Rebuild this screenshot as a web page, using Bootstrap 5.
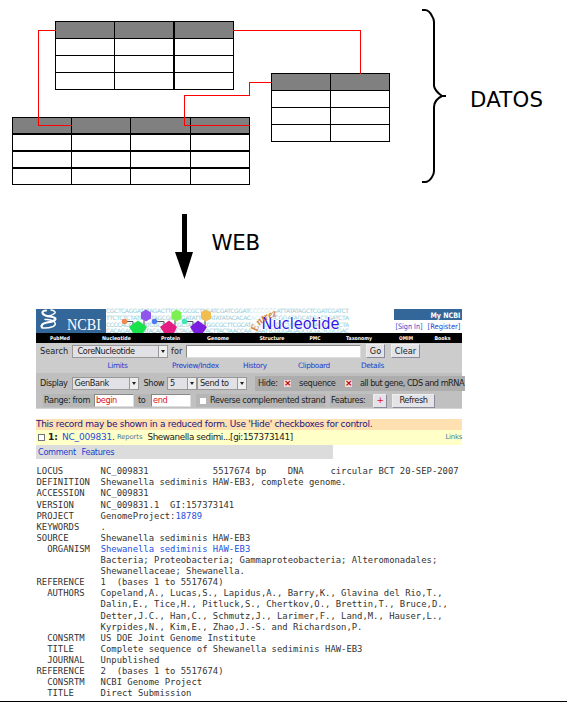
<!DOCTYPE html>
<html lang="es">
<head>
<meta charset="utf-8">
<meta name="viewport" content="width=device-width, initial-scale=1">
<title>Datos y web</title>
<link rel="stylesheet" href="https://cdn.jsdelivr.net/npm/bootstrap@5.3.0/dist/css/bootstrap.min.css">
<style>
body{width:567px;height:702px;font-family:"DejaVu Sans",sans-serif;font-size:8.2px;line-height:1;color:#222}
.sheet{height:702px;border-bottom:1px solid #000}
svg text{font-family:"DejaVu Sans",sans-serif}
.ncbi{width:426px;margin-left:36px;white-space:nowrap}
.tools{background:#ccc;height:66px;width:426px}
.cells{display:grid;align-items:center;justify-items:start}
.r-search{height:16px;grid-template-columns:35.5px 99.5px 15px 180px 25px auto}
.r-search>:first-child,.r-display>:first-child{margin-left:4px}
.r-links{height:14px;grid-template-columns:71.5px 64.5px 71px 55px 63px auto;font-size:7.4px;letter-spacing:-.38px;color:#1c3fd0}
.r-display{height:20px;width:430px;background:linear-gradient(#bfbfbf,#bfbfbf) 0 0/426px 100% no-repeat;grid-template-columns:35.5px 72px 23.5px 30px 58px 210px;letter-spacing:-.37px}
.r-range{height:16px;background:#c0c0c0;border-bottom:1px solid #d4d4d4;grid-template-columns:153px 134px auto;padding-left:7px;letter-spacing:-.4px}
.tools .cells span{flex:none}
.pick{display:flex;height:13px;background:#e2e2e6;border:1px solid #999;align-items:center;justify-content:space-between;padding-left:5px;letter-spacing:-.4px}
.pick i{width:9px;height:11px;border-left:1px solid #999;background:#eee;display:flex;align-items:center;justify-content:center}
.pick i::after{content:"";border:2px solid transparent;border-top:3px solid #222;border-bottom:0}
.field{background:#fff;border:1px solid #888;border-right-color:#ddd;border-bottom-color:#ddd}
.push{background:#e3e3e8;border:1px solid #eee;border-right-color:#8a8a9a;border-bottom-color:#8a8a9a;display:flex;align-items:center;justify-content:center}
.box{background:#adadad;height:15px;display:flex;align-items:center}
.box.soft{background:#b6b6b6;height:13px}
.tick{width:7px;height:7px;background:#f4dada;color:#b00;display:flex;align-items:center;justify-content:center;font-size:9px;font-weight:bold}
.sq{width:6px;height:6px;background:#fff}
.red{color:#e01020}
.note{height:11.7px;margin-top:9.6px;background:#ffe0b0;color:#1a1480;font-size:9px;letter-spacing:-.3px;display:flex;align-items:center}
.rec{height:15px;background:#ffffc8;display:flex;align-items:center;font-size:9px}
.rec>*{flex:none}
.gi{font-size:8.8px;letter-spacing:-.4px}
.tabs{height:14px;width:297px;background:#dcdcdc;color:#1c3fd0;display:flex;align-items:center;font-size:8.2px;letter-spacing:-.33px}
.flat{margin:7px 0 0 .5px;font:8.89px/11.1px "DejaVu Sans Mono",monospace;color:#333;overflow:visible}
.lk{color:#2450e0}
</style>
<script src="https://cdn.jsdelivr.net/npm/bootstrap@5.3.0/dist/js/bootstrap.bundle.min.js"></script>
</head>
<body class="m-0 bg-white overflow-hidden">
<main class="sheet overflow-hidden">
<svg class="d-block" width="567" height="308" viewBox="0 0 567 308">
  <g fill="#808080"><path d="M55 21h179v18H55zM12 117h238v17H12zM271 73h119v18H271z"/></g>
  <g fill="none" stroke="#000" shape-rendering="crispEdges">
    <path d="M55.500 21.500h178v68h-178zM55 38.500h179M55 55.500h179M55 72.500h179M114.500 21v69"/>
    <path d="M174 21v69" stroke-width="2"/>
    <path d="M12.500 117.500h237v67h-237zM71.500 117v68M130.500 117v68M190.500 117v68"/>
    <path d="M12 134h238M12 151h238M12 168h238" stroke-width="2"/>
    <path d="M271.500 73.500h118v68h-118zM271 90.500h119M271 107.500h119M271 124.500h119M330.500 73v69"/>
    <path stroke="#f00" d="M56 30.500H38.500V125.500H72M233 30.500H360.500V74M272 82.500H249.500V95.500H184.500V125.500H250"/>
  </g>
  <path d="M422 10h3q4 0 7 6q2 3 2 6v64q1 5 8 10h4h-4q-8 4-8 11v64q0 3-2 6q-3 5-7 5h-3" fill="none" stroke="#000" stroke-width="2"/>
  <text x="470" y="106.500" font-size="21.300" textLength="73">DATOS</text>
  <path d="M182 214h5v38h6l-8.500 27-9.500-27h7z"/>
  <text x="211.500" y="250" font-size="21.300" textLength="48.500">WEB</text>
</svg>
<section class="ncbi">
<svg class="d-block" width="426" height="35" viewBox="36 308 426 35">
  <g fill="#94cbd6" font-size="6">
    <text x="106" y="313" textLength="243">CGCTCAGGATATAGACTTCGCGCGCTAGATCGATCGGATCCCCGCGATTATATAGCTCGATCGATCT</text>
    <text x="106" y="319.500" textLength="243">TTCTCTCTATCGATAGCGCTCGATATTCGATATATACACACACAGCGCGGATAGCATGACTGATCTA</text>
    <text x="106" y="326.500" textLength="243">CCCCACACAGATCGCGAGCGCTAGCGTGGCGCTTCGCATACGTCGTGTCTACGATCGATCGCATCTA</text>
    <text x="106" y="332.500" textLength="243">CACAGACGATATACACGCGCTAGATCTTACTTACTAACCAATCAATTCGGGAGAGCGCGCTCGCGAC</text>
  </g>
  <path fill="#336699" d="M36 309h70v24H36zM394 309h68v11h-68z"/>
  <g fill="none" stroke="#fff" stroke-linecap="round">
    <path d="M46 310.500Q41 311 43 314Q45 316 50 316.500Q57 317.500 55 320Q52 322 47 322.500Q40 324 42 327.500" stroke-width="2.200"/>
    <path d="M51 310q5 1 4 3-2 2-6 3M45 319.500q5-.5 9 2 3 3-1 5-5 2-10 1.500" stroke-width="1.500"/>
  </g>
  <text x="67" y="330" font-size="16" fill="#fff" textLength="34" lengthAdjust="spacingAndGlyphs" style="font-family:'Liberation Serif',serif">NCBI</text>
  <path d="M126 321.500h7v6M140 327l4-1v-8M156 321.500h8v6M170 327l5-1v-8M186 321.500h7v6M199 327l6-1v-8" fill="none" stroke="#555"/>
  <g><circle cx="124.500" cy="321.500" r="2.800" fill="#f18a50"/><circle cx="154.500" cy="321.500" r="2.800" fill="#4d7cf0"/><circle cx="184.500" cy="321.500" r="2.800" fill="#45e5ba"/>
  <path fill="#19e34b" d="M138 320.500l9 6.500-4 6h-10l-4-6z"/><path fill="#e41d82" d="M169 320.500l8 6.500-3 6h-10l-4-6z"/><path fill="#7b1ee0" d="M198 320.500l9 6.500-4 6h-9l-4-6z"/>
  <path fill="#9055ec" d="M146 309.500l5 3v6l-5 3-5-3v-6z"/><path fill="#7cf050" d="M176.500 309.500l5 3v6l-5 3-5-3v-6z"/><path fill="#f2bd50" d="M206 309.500l5 3v6l-5 3-5-3v-6z"/></g>
  <path fill="#fff" opacity=".6" d="M250 309h28l-16 20-10 4z"/>
  <text x="261.500" y="329" font-size="16" fill="#3018e8" stroke="#fff" stroke-width="1.500" paint-order="stroke" textLength="78" lengthAdjust="spacingAndGlyphs">Nucleotide</text>
  <path id="arc" d="M258 332Q257 321 285 313" fill="none"/>
  <text font-size="11" font-weight="bold" fill="#d08038" font-style="italic" style="font-family:'Liberation Serif',serif"><textPath href="#arc" textLength="27" lengthAdjust="spacingAndGlyphs">Entrez</textPath></text>
  <text x="430.500" y="317.500" font-size="7.500" font-weight="bold" fill="#fff" textLength="30" lengthAdjust="spacingAndGlyphs">My NCBI</text>
  <g fill="#1c3fd0" font-size="7.500"><text x="395.500" y="329" textLength="27" lengthAdjust="spacingAndGlyphs">[Sign In]</text><text x="427.500" y="329" textLength="33" lengthAdjust="spacingAndGlyphs">[Register]</text></g>
  <path d="M36 333h426v10H36z"/>
  <g fill="#fff" font-size="5.200" font-weight="bold">
    <text x="50" y="339.700" textLength="20" lengthAdjust="spacingAndGlyphs">PubMed</text><text x="102" y="339.700" textLength="29" lengthAdjust="spacingAndGlyphs">Nucleotide</text><text x="161" y="339.700" textLength="19" lengthAdjust="spacingAndGlyphs">Protein</text><text x="207" y="339.700" textLength="22" lengthAdjust="spacingAndGlyphs">Genome</text><text x="259.500" y="339.700" textLength="25" lengthAdjust="spacingAndGlyphs">Structure</text><text x="309.500" y="339.700" textLength="11" lengthAdjust="spacingAndGlyphs">PMC</text><text x="346" y="339.700" textLength="26" lengthAdjust="spacingAndGlyphs">Taxonomy</text><text x="399" y="339.700" textLength="14" lengthAdjust="spacingAndGlyphs">OMIM</text><text x="434.500" y="339.700" textLength="16" lengthAdjust="spacingAndGlyphs">Books</text>
  </g>
</svg>
<div class="tools">
  <div class="cells r-search">
    <span>Search</span><div class="pick" style="width:96px">CoreNucleotide<i></i></div><span>for</span>
    <div class="field" style="width:175px;height:13px"></div><div class="push" style="width:19px;height:14px">Go</div><div class="push" style="width:29px;height:14px">Clear</div>
  </div>
  <div class="cells r-links"><span></span><span>Limits</span><span>Preview/Index</span><span>History</span><span>Clipboard</span><span>Details</span></div>
  <div class="cells r-display">
    <span>Display</span><div class="pick" style="width:67px;padding-left:2px">GenBank<i></i></div><span>Show</span><div class="pick" style="width:30px;padding-left:2px">5<i></i></div><div class="pick" style="width:50px;padding-left:2px">Send to<i></i></div>
    <div class="box w-100"><span style="margin-left:3px;width:26px">Hide:</span><span class="tick">×</span><span style="margin-left:8px;width:46px">sequence</span><span class="tick">×</span><span style="margin-left:8px;letter-spacing:-.51px">all but gene, CDS and mRNA</span></div>
  </div>
  <div class="cells r-range">
    <div class="box soft" style="width:148px"><span style="margin-left:1px;width:50px">Range: from</span><span class="field red" style="width:40px;height:13px;padding:1px">begin</span><span style="margin-left:4px;width:13px">to</span><span class="field red" style="width:40px;height:13px;padding:1px">end</span></div>
    <div class="box soft" style="width:129px"><span class="sq" style="margin:0 4px"></span><span>Reverse complemented strand</span></div>
    <div class="d-flex align-items-center"><span class="box soft" style="width:43px;padding-left:1px">Features:</span><span class="push red" style="width:14px;height:14px;font-size:9px">+</span><span class="push" style="width:43px;height:14px;margin-left:5px">Refresh</span></div>
  </div>
</div>
<div class="note"><span>This record may be shown in a reduced form. Use 'Hide' checkboxes for control.</span></div>
<div class="rec"><span class="sq border border-secondary" style="width:7px;height:7px;margin:0 3px 0 2px"></span><b style="width:14px">1:</b><span class="lk" style="letter-spacing:-.2px">NC_009831</span><span>.</span><span style="width:30.500px;margin-left:2px;font-size:6.8px;letter-spacing:-.1px;color:#4878a0">Reports</span><span class="gi">Shewanella sedimi...[gi:157373141]</span><span class="ms-auto" style="font-size:6.8px;letter-spacing:-.2px;color:#4878a0">Links</span></div>
<div class="tabs"><span style="margin-left:2px;width:43.500px">Comment</span><span>Features</span></div>
<pre class="flat">LOCUS       NC_009831            5517674 bp    DNA     circular BCT 20-SEP-2007
DEFINITION  Shewanella sediminis HAW-EB3, complete genome.
ACCESSION   NC_009831
VERSION     NC_009831.1  GI:157373141
PROJECT     GenomeProject:<span class="lk">18789</span>
KEYWORDS    .
SOURCE      Shewanella sediminis HAW-EB3
  ORGANISM  <span class="lk">Shewanella sediminis HAW-EB3</span>
            Bacteria; Proteobacteria; Gammaproteobacteria; Alteromonadales;
            Shewanellaceae; Shewanella.
REFERENCE   1  (bases 1 to 5517674)
  AUTHORS   Copeland,A., Lucas,S., Lapidus,A., Barry,K., Glavina del Rio,T.,
            Dalin,E., Tice,H., Pitluck,S., Chertkov,O., Brettin,T., Bruce,D.,
            Detter,J.C., Han,C., Schmutz,J., Larimer,F., Land,M., Hauser,L.,
            Kyrpides,N., Kim,E., Zhao,J.-S. and Richardson,P.
  CONSRTM   US DOE Joint Genome Institute
  TITLE     Complete sequence of Shewanella sediminis HAW-EB3
  JOURNAL   Unpublished
REFERENCE   2  (bases 1 to 5517674)
  CONSRTM   NCBI Genome Project
  TITLE     Direct Submission</pre>
</section>
</main>
</body>
</html>
